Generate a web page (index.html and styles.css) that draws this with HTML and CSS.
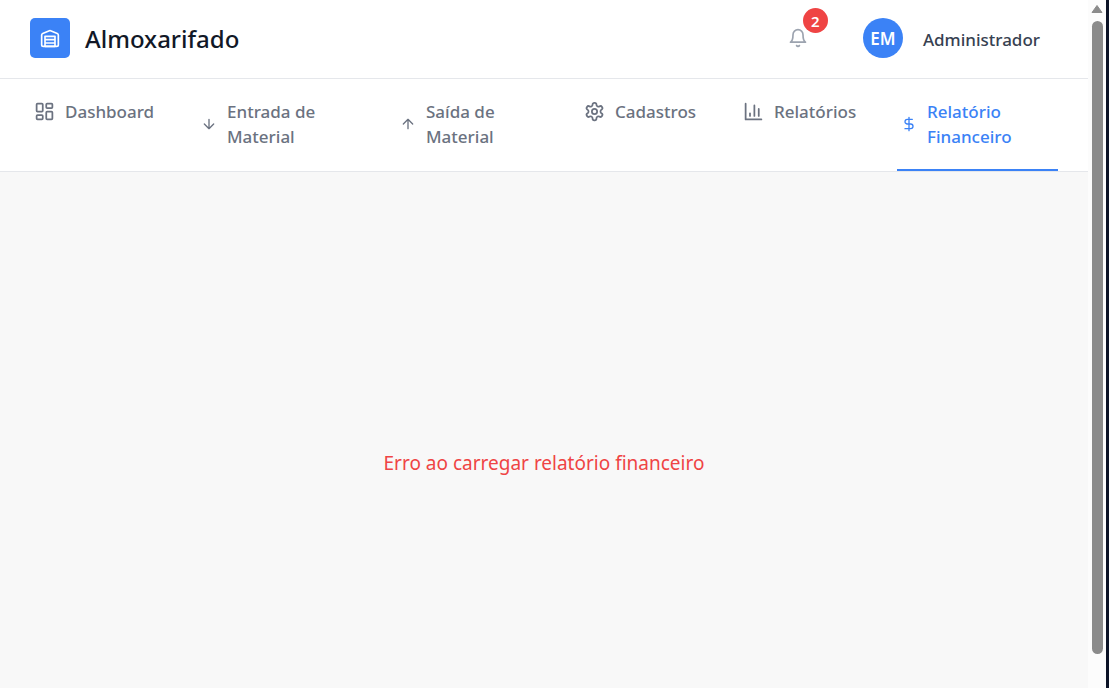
FILE: index.html
```html
<!DOCTYPE html>
<html lang="pt-BR">
<head>
<meta charset="utf-8">
<meta name="viewport" content="width=device-width, initial-scale=1">
<title>Almoxarifado</title>
<link rel="stylesheet" href="styles.css">
</head>
<body>
<div class="app">
  <header class="header">
    <div class="brand">
      <span class="logo"><svg class="icon logo-icon" viewBox="0 0 24 24" aria-hidden="true"><path d="M22 8.350V20a2 2 0 0 1-2 2H4a2 2 0 0 1-2-2V8.350A2 2 0 0 1 3.260 6.500l8-3.200a2 2 0 0 1 1.480 0l8 3.200A2 2 0 0 1 22 8.350Z"/><path d="M6 18h12M6 14h12M6 10h12v12H6z"/></svg></span>
      <h1 class="title">Almoxarifado</h1>
    </div>
    <div class="account">
      <button class="bell" type="button" aria-label="Notificações">
        <svg class="icon bell-icon" viewBox="0 0 24 24" aria-hidden="true"><path d="M6 8a6 6 0 0 1 12 0c0 7 3 9 3 9H3s3-2 3-9M10.300 21a1.940 1.940 0 0 0 3.400 0"/></svg>
        <span class="badge">2</span>
      </button>
      <span class="avatar">EM</span>
      <span class="user">Administrador</span>
    </div>
  </header>
  <nav class="nav">
    <a class="tab" href="#dashboard"><svg class="icon" viewBox="0 0 24 24" aria-hidden="true"><rect x="3" y="3" width="7" height="9" rx="1"/><rect x="14" y="3" width="7" height="5" rx="1"/><rect x="14" y="12" width="7" height="9" rx="1"/><rect x="3" y="16" width="7" height="5" rx="1"/></svg><span>Dashboard</span></a>
    <a class="tab" href="#entrada"><svg class="icon icon-small" viewBox="0 0 24 24" aria-hidden="true"><path d="M12 5v14M19 12l-7 7-7-7"/></svg><span>Entrada de Material</span></a>
    <a class="tab" href="#saida"><svg class="icon icon-small" viewBox="0 0 24 24" aria-hidden="true"><path d="M12 19V5M5 12l7-7 7 7"/></svg><span>Saída de Material</span></a>
    <a class="tab" href="#cadastros"><svg class="icon" viewBox="0 0 24 24" aria-hidden="true"><path d="M12.220 2h-.44a2 2 0 0 0-2 2v.18a2 2 0 0 1-1 1.730l-.43.25a2 2 0 0 1-2 0l-.15-.08a2 2 0 0 0-2.730.73l-.22.38a2 2 0 0 0 .73 2.730l.15.1a2 2 0 0 1 1 1.720v.51a2 2 0 0 1-1 1.740l-.15.09a2 2 0 0 0-.73 2.730l.22.38a2 2 0 0 0 2.730.73l.15-.08a2 2 0 0 1 2 0l.43.25a2 2 0 0 1 1 1.730V20a2 2 0 0 0 2 2h.44a2 2 0 0 0 2-2v-.18a2 2 0 0 1 1-1.730l.43-.25a2 2 0 0 1 2 0l.15.08a2 2 0 0 0 2.730-.73l.22-.39a2 2 0 0 0-.73-2.730l-.15-.08a2 2 0 0 1-1-1.740v-.5a2 2 0 0 1 1-1.740l.15-.09a2 2 0 0 0 .73-2.730l-.22-.38a2 2 0 0 0-2.730-.73l-.15.08a2 2 0 0 1-2 0l-.43-.25a2 2 0 0 1-1-1.730V4a2 2 0 0 0-2-2z"/><circle cx="12" cy="12" r="3"/></svg><span>Cadastros</span></a>
    <a class="tab" href="#relatorios"><svg class="icon" viewBox="0 0 24 24" aria-hidden="true"><path d="M3 3v18h18M18 17V9M13 17V5M8 17v-3"/></svg><span>Relatórios</span></a>
    <a class="tab tab-active" href="#financeiro" aria-current="page"><svg class="icon icon-small" viewBox="0 0 24 24" aria-hidden="true"><path d="M12 2v20M17 5H9.500a3.500 3.500 0 0 0 0 7h5a3.500 3.500 0 0 1 0 7H6"/></svg><span>Relatório Financeiro</span></a>
  </nav>
  <main class="main">
    <p class="error" role="alert">Erro ao carregar relatório financeiro</p>
  </main>
</div>
<div class="scrollbar" aria-hidden="true">
  <svg class="arrow" viewBox="0 0 12 10"><path d="M6 1.500 11 8.500H1z"/></svg>
  <span class="thumb"></span>
</div>
</body>
</html>
```
FILE: styles.css
```css
* { box-sizing: border-box; }

body {
  margin: 0;
  min-height: 100vh;
  display: flex;
  background: #f8f8f8;
  font-family: "Segoe UI", "Noto Sans", sans-serif;
  color: #111827;
}

.app {
  flex: 1;
  min-width: 0;
  display: flex;
  flex-direction: column;
}

.header {
  display: flex;
  align-items: center;
  justify-content: space-between;
  padding: 18px 30px 20px;
  background: #fff;
  border-bottom: 1px solid #e5e7eb;
}

.brand { display: flex; align-items: center; gap: 15px; }

.logo {
  display: flex;
  align-items: center;
  justify-content: center;
  width: 40px;
  height: 40px;
  border-radius: 5px;
  background: #3b82f6;
  color: #fff;
}

.title {
  margin: 0;
  padding-top: 2px;
  font-size: 24px;
  line-height: 38px;
  font-weight: 500;
}

.icon {
  flex: none;
  width: 21px;
  height: 21px;
  fill: none;
  stroke: currentColor;
  stroke-width: 2;
  stroke-linecap: round;
  stroke-linejoin: round;
}

.icon-small { width: 16px; height: 16px; }
.logo-icon { width: 20px; height: 20px; }
.bell-icon { width: 20px; height: 20px; }

.account {
  display: flex;
  align-items: center;
  padding-right: 18px;
}

.bell {
  position: relative;
  display: flex;
  padding: 10px;
  margin-right: 45px;
  border: 0;
  background: none;
  color: #9ca3af;
}

.badge {
  position: absolute;
  top: -10px;
  right: -10px;
  width: 25px;
  height: 25px;
  border-radius: 50%;
  background: #ef4444;
  color: #fff;
  font-family: "Segoe UI", "Noto Sans", sans-serif;
  font-size: 15px;
  font-weight: 600;
  line-height: 26px;
  text-align: center;
}

.avatar {
  width: 40px;
  height: 40px;
  margin-right: 20px;
  border-radius: 50%;
  background: #3b82f6;
  color: #fff;
  font-size: 17px;
  font-weight: 600;
  line-height: 42px;
  text-align: center;
}

.user {
  padding-top: 2px;
  color: #374151;
  font-size: 17px;
  font-weight: 500;
}

.nav {
  display: grid;
  grid-template-columns: 127fr 159fr 144fr 119fr 118fr 161fr;
  column-gap: 40px;
  padding: 0 30px;
  background: #fff;
  border-bottom: 1px solid #e5e7eb;
}

.tab {
  display: flex;
  align-items: center;
  align-self: start;
  gap: 10px;
  min-width: 0;
  padding: 20px 4px;
  border-bottom: 2px solid transparent;
  color: #6b7280;
  font-size: 17px;
  font-weight: 500;
  line-height: 25px;
  text-decoration: none;
}

.tab-active { border-color: #3b82f6; color: #3b82f6; }

.main {
  flex: 1;
  display: flex;
  align-items: center;
  justify-content: center;
  padding: 66px 30px 0;
}

.error {
  margin: 0;
  color: #ef4444;
  font-size: 19px;
  line-height: 28px;
}

.scrollbar {
  display: flex;
  flex-direction: column;
  align-items: center;
  gap: 7px;
  width: 21px;
  padding: 4px 0 34px;
  border-right: 3px solid #0b1226;
  background: #fcfcfc;
}

.arrow {
  width: 12px;
  height: 10px;
  fill: #8b8b8b;
  stroke: #8b8b8b;
  stroke-width: 1;
  stroke-linejoin: round;
}

.thumb {
  flex: 1;
  width: 11px;
  border-radius: 6px;
  background: #8b8b8b;
}
```
